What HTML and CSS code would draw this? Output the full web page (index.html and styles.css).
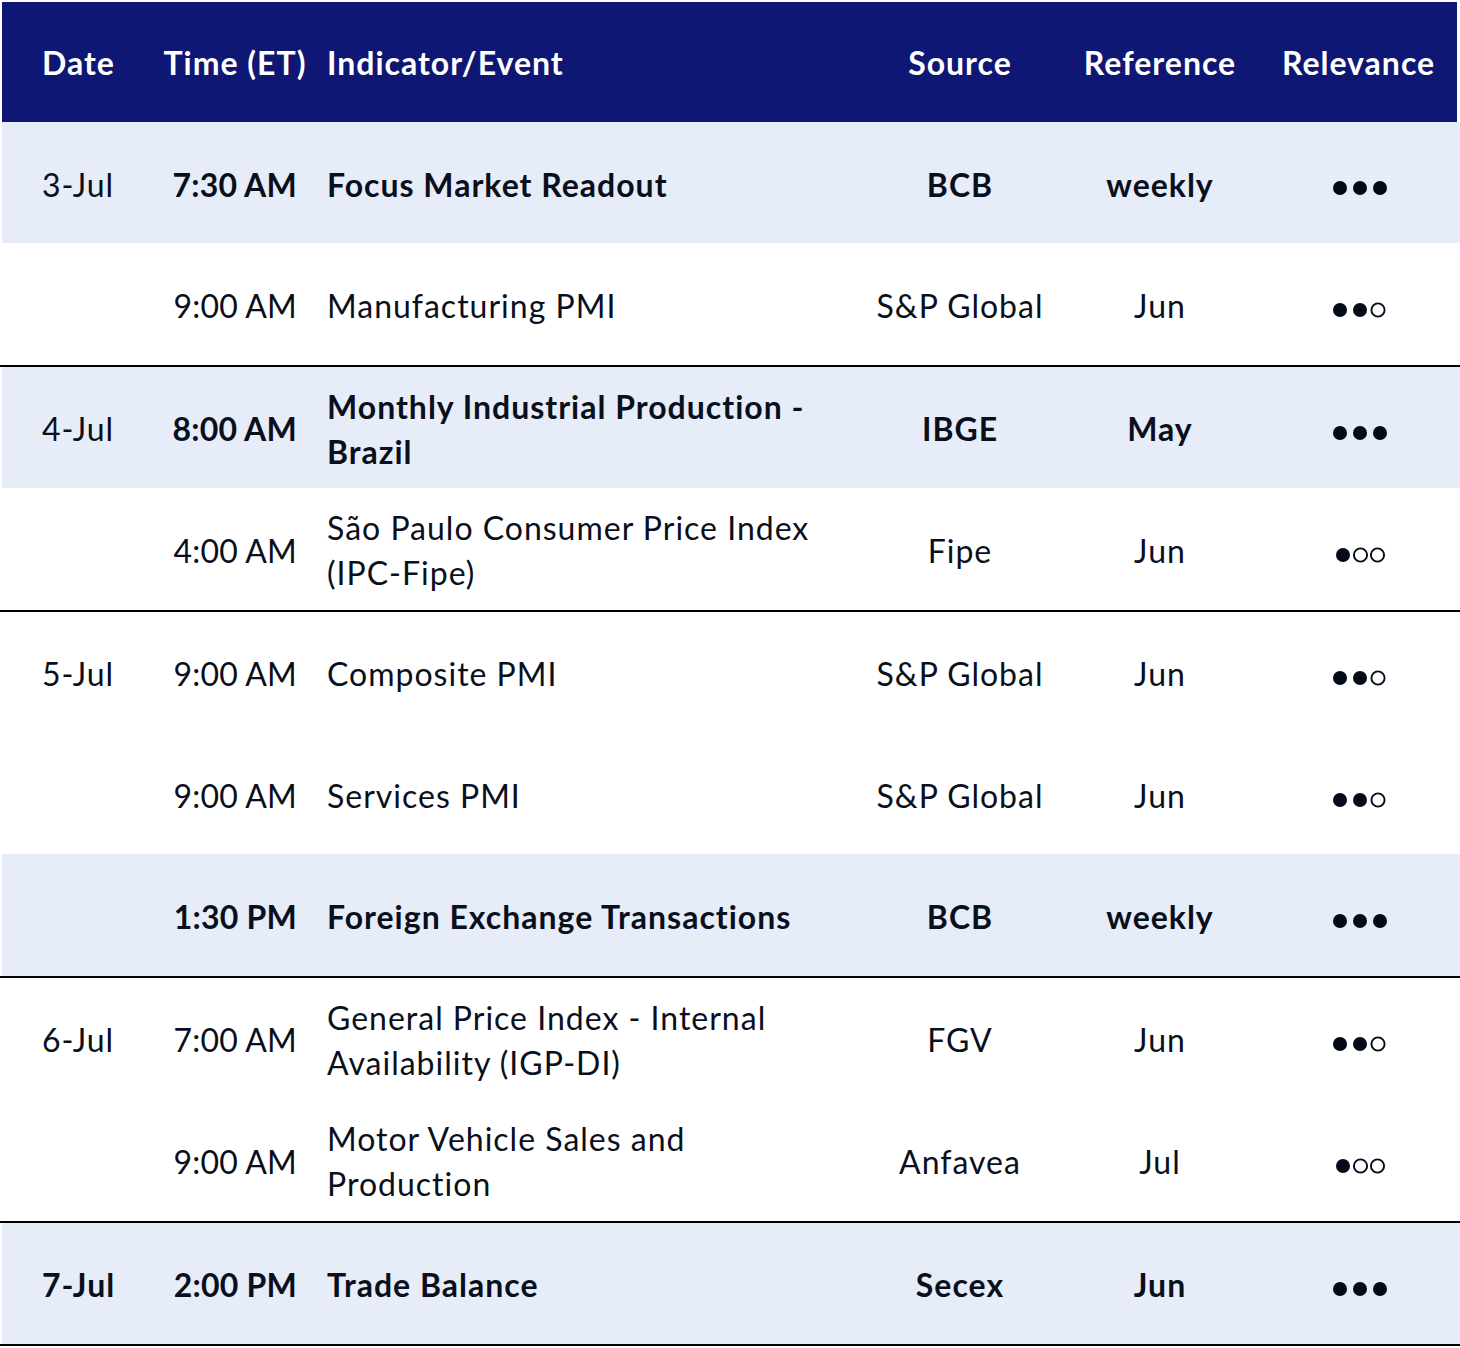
FILE: index.html
```html
<!DOCTYPE html>
<html lang="en">
<head>
<meta charset="utf-8">
<title>Brazil Economic Calendar</title>
<link rel="stylesheet" href="styles.css">
</head>
<body>
<div class="cal">
  <div class="head">
    <div class="c-date">Date</div>
    <div class="c-time">Time (ET)</div>
    <div class="c-event">Indicator/Event</div>
    <div class="c-mid">Source</div>
    <div class="c-mid">Reference</div>
    <div class="c-mid">Relevance</div>
  </div>

  <div class="row band strong">
    <div class="c-date">3-Jul</div>
    <div class="c-time">7:30 AM</div>
    <div class="c-event">Focus Market Readout</div>
    <div class="c-mid">BCB</div>
    <div class="c-mid">weekly</div>
    <div class="c-mid"><svg class="dots" viewBox="0 0 54 16"><circle class="f" cx="7" cy="8" r="7"/><circle class="f" cx="27" cy="8" r="7"/><circle class="f" cx="47" cy="8" r="7"/></svg></div>
  </div>

  <div class="row rule">
    <div class="c-date"></div>
    <div class="c-time">9:00 AM</div>
    <div class="c-event">Manufacturing PMI</div>
    <div class="c-mid">S&amp;P Global</div>
    <div class="c-mid">Jun</div>
    <div class="c-mid"><svg class="dots" viewBox="0 0 54 16"><circle class="f" cx="7" cy="8" r="7"/><circle class="f" cx="27" cy="8" r="7"/><circle class="o" cx="45" cy="8" r="6.6"/></svg></div>
  </div>

  <div class="row band strong">
    <div class="c-date">4-Jul</div>
    <div class="c-time">8:00 AM</div>
    <div class="c-event">Monthly Industrial Production -<br>Brazil</div>
    <div class="c-mid">IBGE</div>
    <div class="c-mid">May</div>
    <div class="c-mid"><svg class="dots" viewBox="0 0 54 16"><circle class="f" cx="7" cy="8" r="7"/><circle class="f" cx="27" cy="8" r="7"/><circle class="f" cx="47" cy="8" r="7"/></svg></div>
  </div>

  <div class="row rule">
    <div class="c-date"></div>
    <div class="c-time">4:00 AM</div>
    <div class="c-event">São Paulo Consumer Price Index<br>(IPC-Fipe)</div>
    <div class="c-mid">Fipe</div>
    <div class="c-mid">Jun</div>
    <div class="c-mid"><svg class="dots" viewBox="0 0 54 16"><circle class="f" cx="10" cy="8" r="7"/><circle class="o" cx="27.5" cy="8" r="6.6"/><circle class="o" cx="44.5" cy="8" r="6.6"/></svg></div>
  </div>

  <div class="row">
    <div class="c-date">5-Jul</div>
    <div class="c-time">9:00 AM</div>
    <div class="c-event">Composite PMI</div>
    <div class="c-mid">S&amp;P Global</div>
    <div class="c-mid">Jun</div>
    <div class="c-mid"><svg class="dots" viewBox="0 0 54 16"><circle class="f" cx="7" cy="8" r="7"/><circle class="f" cx="27" cy="8" r="7"/><circle class="o" cx="45" cy="8" r="6.6"/></svg></div>
  </div>

  <div class="row">
    <div class="c-date"></div>
    <div class="c-time">9:00 AM</div>
    <div class="c-event">Services PMI</div>
    <div class="c-mid">S&amp;P Global</div>
    <div class="c-mid">Jun</div>
    <div class="c-mid"><svg class="dots" viewBox="0 0 54 16"><circle class="f" cx="7" cy="8" r="7"/><circle class="f" cx="27" cy="8" r="7"/><circle class="o" cx="45" cy="8" r="6.6"/></svg></div>
  </div>

  <div class="row band strong rule">
    <div class="c-date"></div>
    <div class="c-time">1:30 PM</div>
    <div class="c-event">Foreign Exchange Transactions</div>
    <div class="c-mid">BCB</div>
    <div class="c-mid">weekly</div>
    <div class="c-mid"><svg class="dots" viewBox="0 0 54 16"><circle class="f" cx="7" cy="8" r="7"/><circle class="f" cx="27" cy="8" r="7"/><circle class="f" cx="47" cy="8" r="7"/></svg></div>
  </div>

  <div class="row">
    <div class="c-date">6-Jul</div>
    <div class="c-time">7:00 AM</div>
    <div class="c-event">General Price Index - Internal<br>Availability (IGP-DI)</div>
    <div class="c-mid">FGV</div>
    <div class="c-mid">Jun</div>
    <div class="c-mid"><svg class="dots" viewBox="0 0 54 16"><circle class="f" cx="7" cy="8" r="7"/><circle class="f" cx="27" cy="8" r="7"/><circle class="o" cx="45" cy="8" r="6.6"/></svg></div>
  </div>

  <div class="row rule">
    <div class="c-date"></div>
    <div class="c-time">9:00 AM</div>
    <div class="c-event">Motor Vehicle Sales and<br>Production</div>
    <div class="c-mid">Anfavea</div>
    <div class="c-mid">Jul</div>
    <div class="c-mid"><svg class="dots" viewBox="0 0 54 16"><circle class="f" cx="10" cy="8" r="7"/><circle class="o" cx="27.5" cy="8" r="6.6"/><circle class="o" cx="44.5" cy="8" r="6.6"/></svg></div>
  </div>

  <div class="row band strong rule">
    <div class="c-date bold-date">7-Jul</div>
    <div class="c-time">2:00 PM</div>
    <div class="c-event">Trade Balance</div>
    <div class="c-mid">Secex</div>
    <div class="c-mid">Jun</div>
    <div class="c-mid"><svg class="dots" viewBox="0 0 54 16"><circle class="f" cx="7" cy="8" r="7"/><circle class="f" cx="27" cy="8" r="7"/><circle class="f" cx="47" cy="8" r="7"/></svg></div>
  </div>
</div>
</body>
</html>
```

FILE: styles.css
```css
html, body {
  margin: 0;
  padding: 0;
  background: #ffffff;
}

body {
  font-family: Lato, "Open Sans", "Noto Sans", sans-serif;
  font-size: 32px;
  letter-spacing: 1px;
  color: #0a0f1c;
}

.cal {
  width: 1460px;
}

.head {
  display: grid;
  grid-template-columns: 158px 150px 550px 200px 200px 197px;
  align-items: center;
  height: 120px;
  margin: 2px 3px 0 2px;
  background: #0e1874;
  color: #ffffff;
  font-weight: 700;
}

.row {
  display: grid;
  grid-template-columns: 158px 150px 550px 200px 200px 200px;
  align-items: center;
  height: 121.4px;
  padding-left: 2px;
  background-clip: content-box;
}

.row > div {
  padding-top: 3px;
}

.band {
  background-color: #e6ecf8;
}

.rule {
  border-bottom: 2px solid #000000;
}

.strong {
  font-weight: 700;
}

.c-date {
  padding-left: 40px;
  white-space: nowrap;
}

.row .c-date {
  font-weight: 400;
}

.row .c-date.bold-date {
  font-weight: 700;
}

.row .c-time {
  text-align: right;
  padding-right: 13px;
  letter-spacing: 0.2px;
  white-space: nowrap;
}

.head .c-time {
  text-align: center;
  white-space: nowrap;
}

.c-event {
  padding-left: 17px;
  line-height: 45px;
  white-space: nowrap;
}

.c-mid {
  text-align: center;
  white-space: nowrap;
}

.dots {
  display: inline-block;
  width: 54px;
  height: 16px;
  vertical-align: middle;
}

.dots .f {
  fill: #050a18;
}

.dots .o {
  fill: none;
  stroke: #050a18;
  stroke-width: 1.9;
}
```
